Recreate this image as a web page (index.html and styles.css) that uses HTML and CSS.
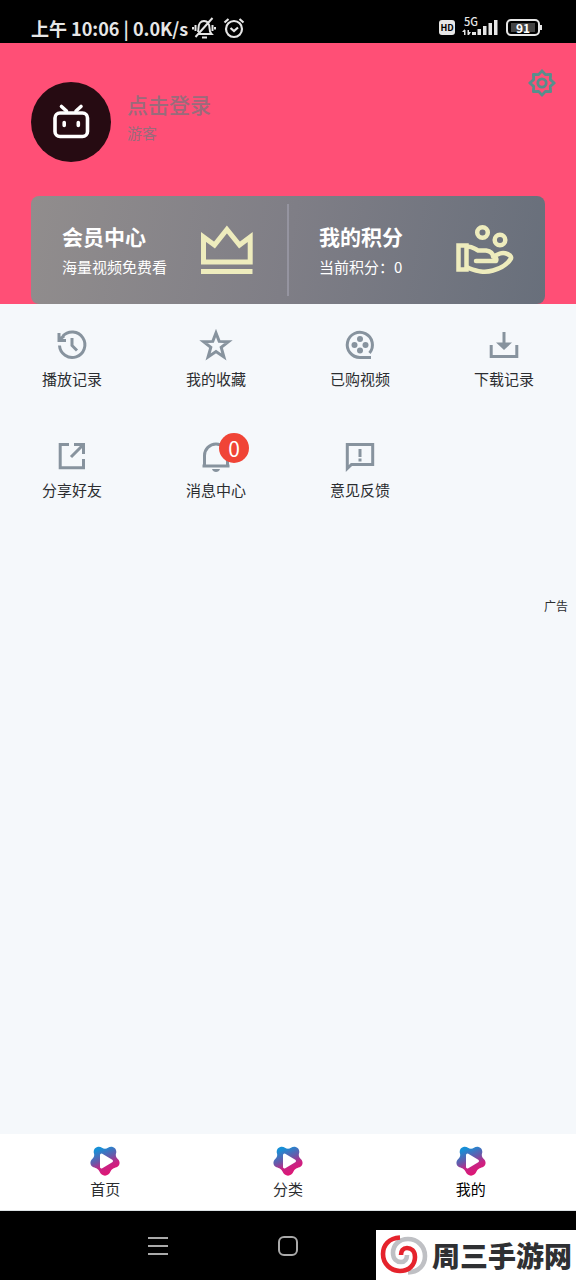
FILE: index.html
```html
<!DOCTYPE html>
<html lang="zh-CN">
<head>
<meta charset="utf-8">
<meta name="viewport" content="width=device-width, initial-scale=1">
<title>我的</title>
<link rel="stylesheet" href="styles.css">
</head>
<body>
<div class="status">
  <span class="status-text">上午 10:06 | 0.0K/s</span>
  <svg class="status-mute" viewBox="0 0 24 22" width="24" height="22" fill="none" stroke="#e6e6e6" stroke-width="2">
    <path d="M6 17h13.500c-2-2-2-3-2-6 0-4-2-7-5.500-7s-5.500 3-5.500 7c0 2 0 3-.8 4M10 20.500h5M20.500 1L3.500 20M3.500 8v6M1 10v2.500M20.500 8v6M23 10v2.500"/>
  </svg>
  <svg class="status-alarm" viewBox="0 0 22 22" width="22" height="22" fill="none" stroke="#e6e6e6" stroke-width="2.200">
    <circle cx="11" cy="12" r="8"/><path d="M7.500 11l3.500 3 4-3.500M1.500 5.500L5.500 2M20.500 5.500L16.500 2"/>
  </svg>
  <span class="hd">HD</span>
  <span class="signal">
    <span class="signal-label">5G</span>
    <svg viewBox="0 0 36 17" width="36" height="17" fill="#e6e6e6">
      <path d="M2 11h1.500v5H2zM0 13l2.700-3v3zM5.500 11H7v5H5.500zM7 16l2-3H7zM10 13h4v3h-4zM15.500 10h3.500v6h-3.500zM21 7h3.500v9H21zM26.500 4H30v12h-3.500zM32 1h3.500v15H32z"/>
    </svg>
  </span>
  <span class="battery"><span class="battery-level">91</span></span>
</div>

<header class="header">
  <button class="profile">
    <svg class="avatar" viewBox="0 0 80 80" width="80" height="80">
      <circle cx="40" cy="40" r="40" fill="#260b12"/>
      <g fill="none" stroke="#fff" stroke-width="3.600" stroke-linecap="round">
        <rect x="24" y="31" width="32.500" height="23.500" rx="5"/>
        <path d="M30.500 24.500l5 4.500M50 24.500L45 29"/>
        <path d="M33.200 40.500v3M47.300 40.500v3"/>
      </g>
    </svg>
    <span class="profile-text">
      <span class="profile-name">点击登录</span>
      <span class="profile-role">游客</span>
    </span>
  </button>
  <button class="settings" aria-label="设置">
    <svg viewBox="0 0 28 28" width="28" height="28" fill="none" stroke="#568f8c" stroke-width="2.800" stroke-linejoin="round">
      <path d="M14 1.800l3.400 3.900 5.200-.3-.3 5.200 3.900 3.400-3.900 3.400.3 5.200-5.200-.3L14 26.200l-3.400-3.900-5.200.3.3-5.200L1.800 14l3.900-3.400-.3-5.200 5.200.3z"/>
      <circle cx="14" cy="14" r="4.200"/>
    </svg>
  </button>
  <section class="card">
    <button class="card-half">
      <span class="card-text"><strong class="card-title">会员中心</strong><span class="card-sub">海量视频免费看</span></span>
      <svg class="card-icon" viewBox="0 0 58 54" width="58" height="54" fill="none" stroke="#eeecbd">
        <path stroke-width="5" d="M4.500 39V14L15.500 22 27.900 6.500 40.500 22 51.200 14V39z"/>
        <path stroke-width="5" d="M2 48.500h51.500"/>
      </svg>
    </button>
    <button class="card-half">
      <span class="card-text"><strong class="card-title">我的积分</strong><span class="card-sub">当前积分：0</span></span>
      <svg class="card-icon" viewBox="0 0 58 54" width="58" height="54" fill="none" stroke="#eeecbd" stroke-width="4.500" stroke-linejoin="round" stroke-linecap="round">
        <circle cx="26.500" cy="9.500" r="5.300"/><circle cx="44" cy="17" r="5.300"/>
        <path stroke-linejoin="miter" d="M2.500 22.500h8v24h-8z"/>
        <path d="M11 23.500c6 0 7 2 11 4h8c5 1 7 3 7 6l7-3c5-2 12 2 11 5-3 5-10 10-18 12-10 3-17 0-26-3M20 38h20c1-2 0-4-3-5"/>
      </svg>
    </button>
  </section>
</header>

<main class="main">
  <nav class="menu" aria-label="功能">
    <a class="item" href="#"><svg class="icon" viewBox="0 0 30 30"><path d="M2.500 15.500a12.700 12.700 0 1 0 3.200-9.200"/><path d="M2 3v7.500h7M2.500 9.500L7 6"/><path d="M15 8v7.500l5 5"/></svg><span>播放记录</span></a>
    <a class="item" href="#"><svg class="icon" viewBox="0 0 30 30"><path d="M15 3l3.200 8.400 9.300.3-7.300 5.700 2.700 9.600-7.900-5.400L7.100 27l2.700-9.600-7.300-5.700 9.300-.3z"/></svg><span>我的收藏</span></a>
    <a class="item" href="#"><svg class="icon" viewBox="0 0 30 30"><path d="M26 27.500H15A12.600 12.600 0 1 1 24.500 23"/><g class="solid"><circle cx="15" cy="9" r="3"/><circle cx="9.500" cy="15" r="3"/><circle cx="20.500" cy="15" r="3"/><circle cx="15" cy="20.500" r="3"/></g></svg><span>已购视频</span></a>
    <a class="item" href="#"><svg class="icon" viewBox="0 0 30 30"><path d="M2.200 15v11.500h25.600V15M15 2v12"/><path class="solid" d="M7 12.500h16L15 20z"/></svg><span>下载记录</span></a>
    <a class="item" href="#"><svg class="icon" viewBox="0 0 30 30"><path d="M12 3.500H3.200v23.300h23.300V18M14 16L26 4M17 3.500h9.500V13"/></svg><span>分享好友</span></a>
    <a class="item" href="#"><span class="icon-wrap"><svg class="icon" viewBox="0 0 30 30"><path d="M1.500 25h27M3.500 25V14.500a11.500 11.500 0 0 1 23 0V25"/><path class="solid" d="M11 28h8c-1 4-7 4-8 0z"/></svg><span class="badge">0</span></span><span>消息中心</span></a>
    <a class="item" href="#"><svg class="icon" viewBox="0 0 30 30"><path d="M2.300 27.500V3.500h25.400v20H6.500zM15 8v8M15 17.500v3"/></svg><span>意见反馈</span></a>
  </nav>
  <p class="ad">广告</p>
</main>

<svg class="defs" width="0" height="0" aria-hidden="true">
  <defs>
    <linearGradient id="brand" gradientUnits="userSpaceOnUse" x1="8" y1="2" x2="19" y2="28">
      <stop offset="0.050" stop-color="#178fd6"/><stop offset="0.450" stop-color="#6b57a8"/><stop offset="0.700" stop-color="#c82384"/><stop offset="1" stop-color="#df1674"/>
    </linearGradient>
    <symbol id="tab-logo" viewBox="0 0 30 30">
      <path fill="url(#brand)" d="M8 .8C11 .3 12.500 2.800 15 2.800S19 .3 22 .8C25.500 1.400 27 4.500 26 7.500C25.400 10 26.200 11.500 28 13.200C30.500 15.700 30 20 26.500 21.200C23.500 22.200 22 22.500 20.500 25.500C18.500 31 11.500 31 9.500 25.500C8 22.500 6.500 22.200 3.500 21.200C0 20 -.5 15.700 2 13.200C3.800 11.500 4.600 10 4 7.500C3 4.500 4.500 1.400 8 .8z"/>
      <path fill="#fff" stroke="#fff" stroke-width="3" stroke-linejoin="round" d="M11.500 9L21.500 15 11.500 21z"/>
    </symbol>
  </defs>
</svg>
<nav class="tabs" aria-label="主导航">
  <a class="tab" href="#"><svg width="30" height="30"><use href="#tab-logo"/></svg><span>首页</span></a>
  <a class="tab" href="#"><svg width="30" height="30"><use href="#tab-logo"/></svg><span>分类</span></a>
  <a class="tab tab-active" href="#" aria-current="page"><svg width="30" height="30"><use href="#tab-logo"/></svg><span>我的</span></a>
</nav>

<footer class="system">
  <button class="system-key" aria-label="最近任务"><svg width="20" height="20" viewBox="0 0 20 20" fill="none" stroke="#aaa" stroke-width="2"><path d="M0 2h20M0 10h20M0 18h20"/></svg></button>
  <button class="system-key" aria-label="主屏幕"><svg width="20" height="20" viewBox="0 0 20 20" fill="none" stroke="#aaa" stroke-width="2"><rect x="1" y="1" width="18" height="18" rx="5"/></svg></button>
  <div class="watermark">
    <svg width="48" height="40" viewBox="0 0 48 40" fill="none" stroke-width="4.600">
      <path id="swirl" stroke="#bfc0c4" transform="rotate(180 24 20)" d="M20 2.500C9 3 3 10 3 19C3 29 11 36 20 36C29 36 35 30 35 22C35 16 31 13 27 13C23 13 21 16 21 20"/>
      <path stroke="#e5232c" d="M20 2.500C9 3 3 10 3 19C3 29 11 36 20 36C29 36 35 30 35 22C35 16 31 13 27 13C23 13 21 16 21 20"/>
    </svg>
    <span>周三手游网</span>
  </div>
</footer>
</body>
</html>
```
FILE: styles.css
```css
* { box-sizing: border-box; }

body {
  margin: 0;
  min-height: 100vh;
  display: flex;
  flex-direction: column;
  background: #f5f8fb;
  color: #2b2d30;
  font-family: "Noto Sans CJK SC", sans-serif;
}

button {
  border: 0;
  padding: 0;
  background: none;
  color: inherit;
  font: inherit;
  text-align: left;
}

a { color: inherit; text-decoration: none; }
svg { display: block; flex: none; }
.defs { position: absolute; }

.status {
  display: flex;
  align-items: center;
  height: 43px;
  padding: 12px 36px 0 31px;
  background: #000;
  color: #e6e6e6;
}
.status-text {
  font-size: 18px;
  font-weight: 700;
  line-height: 30px;
  white-space: nowrap;
}
.status-mute { margin-left: 4px; }
.status-alarm { margin-left: 7px; }
.hd {
  margin-left: auto;
  width: 16px;
  border-radius: 3px;
  background: #e6e6e6;
  color: #000;
  font-size: 9px;
  font-weight: 700;
  line-height: 15px;
  text-align: center;
}
.signal {
  position: relative;
  margin: 0 8px 0 7px;
}
.signal-label {
  position: absolute;
  left: 2px;
  top: -4px;
  font-size: 11px;
  font-weight: 500;
  line-height: 12px;
}
.battery {
  position: relative;
  width: 34px;
  padding: 2px 3px;
  border: 2px solid #e6e6e6;
  border-radius: 5px;
}
.battery::after {
  content: "";
  position: absolute;
  right: -4px;
  top: 4px;
  width: 2px;
  height: 5px;
  background: #e6e6e6;
}
.battery-level {
  display: block;
  background: #444;
  color: #fff;
  font-size: 12px;
  font-weight: 700;
  line-height: 9px;
  text-align: center;
}

.header {
  display: grid;
  grid-template-columns: 1fr auto;
  padding: 39px 31px 0;
  background: #ff4f76;
}
.profile {
  display: flex;
  align-items: center;
  gap: 16px;
}
.profile-text {
  display: flex;
  flex-direction: column;
  gap: 4px;
  padding-bottom: 12px;
  color: #9a6b7b;
}
.profile-name {
  font-size: 21px;
  font-weight: 500;
  line-height: 30px;
}
.profile-role {
  font-size: 15px;
  line-height: 20px;
}
.settings {
  align-self: start;
  margin: -13px -11px 0 0;
}

.card {
  grid-column: 1 / -1;
  display: grid;
  grid-template-columns: 1fr 1fr;
  margin-top: 34px;
  border-radius: 8px;
  background: linear-gradient(100deg, #918d8d, #7f7e86 50%, #686f7b);
  color: #fff;
}
.card-half {
  position: relative;
  display: flex;
  align-items: center;
  justify-content: space-between;
  height: 108px;
  padding: 0 31px;
}
.card-half + .card-half::before {
  content: "";
  position: absolute;
  left: -1px;
  top: 8px;
  bottom: 8px;
  width: 2px;
  background: #9594a0;
}
.card-text {
  display: flex;
  flex-direction: column;
  gap: 4px;
}
.card-title {
  font-size: 21px;
  font-weight: 700;
  line-height: 30px;
}
.card-sub {
  font-size: 15px;
  line-height: 24px;
  white-space: nowrap;
}

.main { flex: 1; }
.menu {
  display: grid;
  grid-template-columns: repeat(4, 1fr);
  row-gap: 50px;
  padding-top: 26px;
}
.item {
  display: flex;
  flex-direction: column;
  align-items: center;
  gap: 7px;
  font-size: 15px;
  line-height: 24px;
}
.icon {
  width: 30px;
  height: 30px;
  overflow: visible;
  fill: none;
  stroke: #87939e;
  stroke-width: 3;
}
.icon .solid { fill: #87939e; stroke: none; }
.icon-wrap { position: relative; }
.badge {
  position: absolute;
  left: 18px;
  top: -8px;
  width: 30px;
  border-radius: 50%;
  background: #f04436;
  color: #fff;
  font-size: 21px;
  line-height: 30px;
  text-align: center;
}
.ad {
  margin: 94px 8px 0;
  font-size: 12px;
  line-height: 20px;
  text-align: right;
}

.tabs {
  display: grid;
  grid-template-columns: repeat(3, 1fr);
  padding: 12px 14px 10px;
  border-bottom: 1px solid #dde2e5;
  background: #fff;
}
.tab {
  display: flex;
  flex-direction: column;
  align-items: center;
  gap: 2px;
  font-size: 15px;
  line-height: 22px;
}
.tab-active { color: #000; }

.system {
  position: relative;
  display: flex;
  justify-content: center;
  height: 69px;
  padding-right: 130px;
  background: #000;
}
.system-key {
  display: flex;
  justify-content: center;
  align-items: center;
  width: 130px;
}
.watermark {
  position: absolute;
  right: 0;
  bottom: 0;
  display: flex;
  align-items: center;
  gap: 4px;
  width: 200px;
  height: 50px;
  padding-left: 4px;
  overflow: hidden;
  background: #fff;
  color: #2f3033;
  font-size: 28px;
  font-weight: 900;
  line-height: 50px;
  white-space: nowrap;
}
```
